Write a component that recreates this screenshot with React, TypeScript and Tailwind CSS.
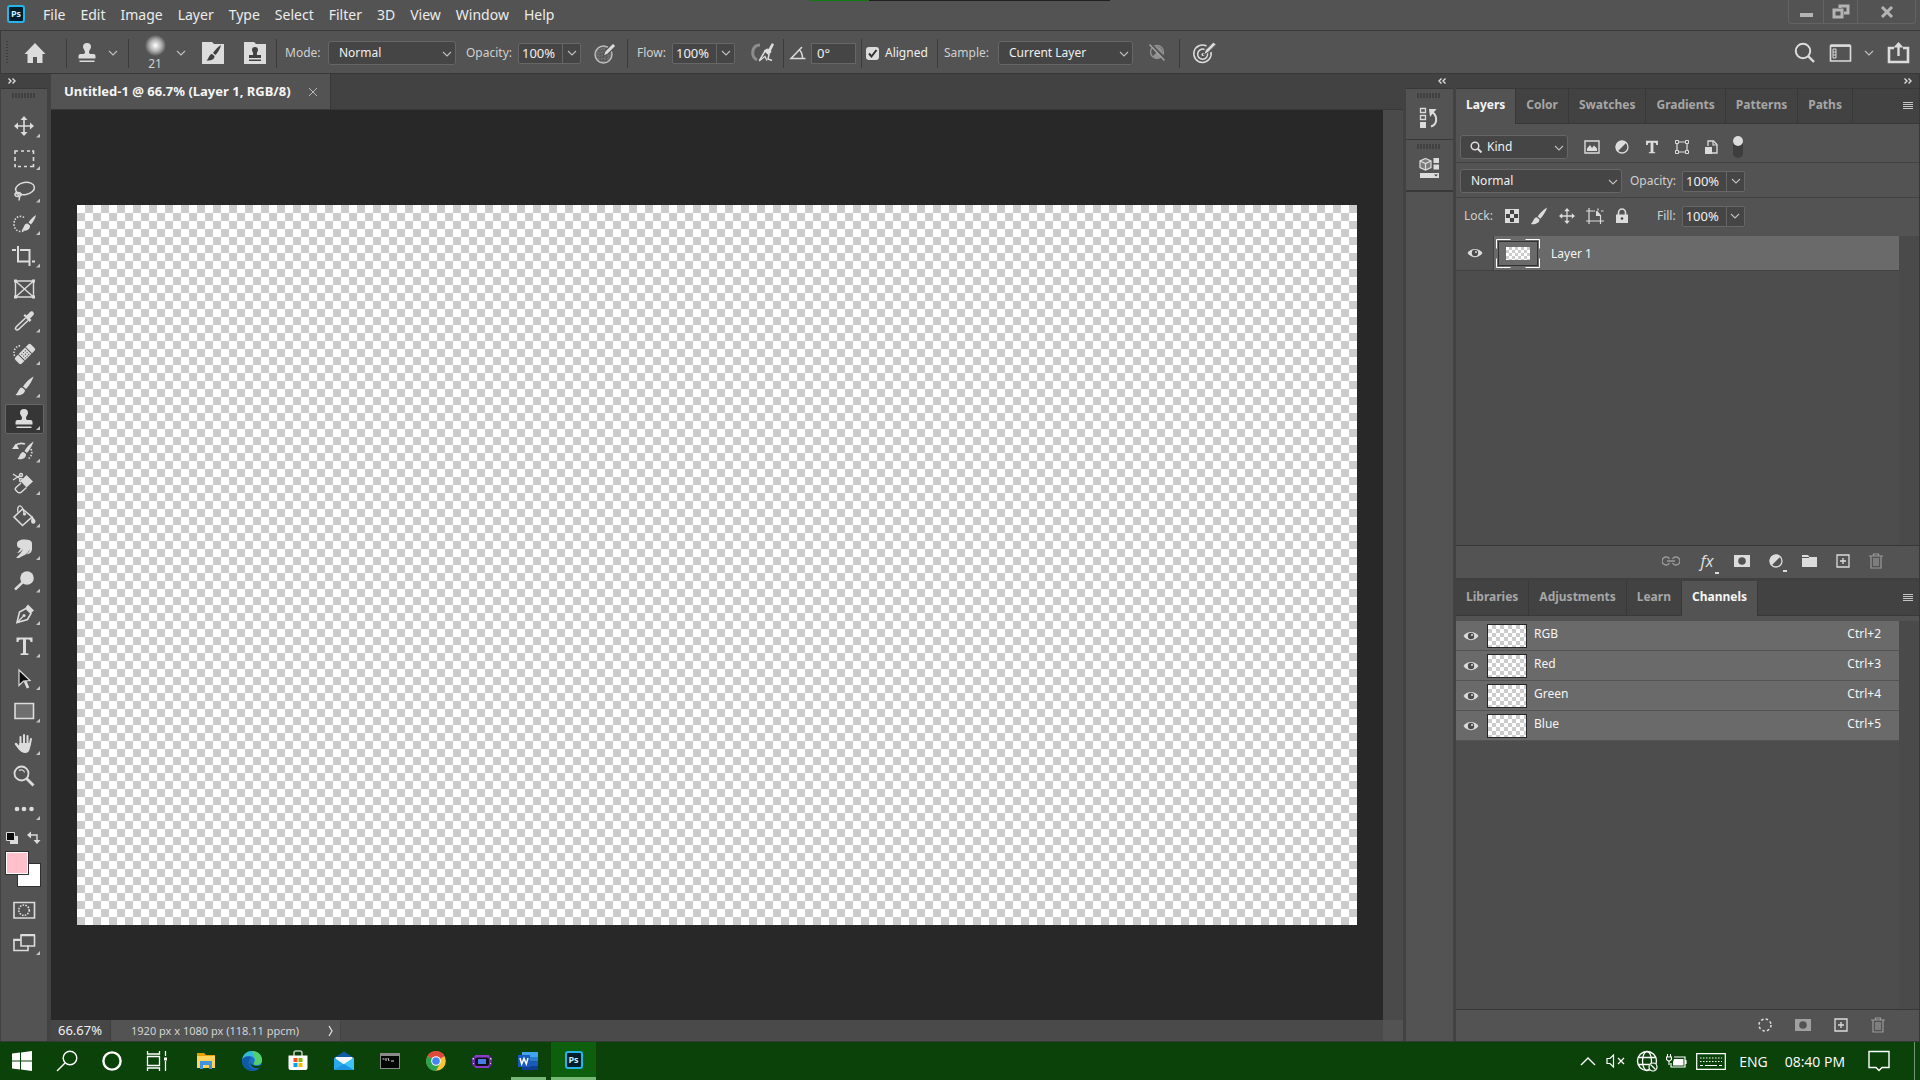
import { useState } from "react";
import type { ReactNode } from "react";

type IconProps = {
  children: ReactNode;
  box?: string;
  className?: string;
};

function Icon({ children, box = "0 0 24 24", className = "h-6 w-6" }: IconProps) {
  return (
    <svg
      viewBox={box}
      className={`shrink-0 ${className}`}
      fill="none"
      stroke="#dcdcdc"
      strokeWidth="1.6"
      aria-hidden="true"
    >
      {children}
    </svg>
  );
}

function Chevron({ className = "" }: { className?: string }) {
  return (
    <Icon box="0 0 12 12" className={`h-3 w-3 ${className}`}>
      <path d="M2 4l4 4 4-4" stroke="#c0c0c0" strokeWidth="1.1" />
    </Icon>
  );
}

const MENUS = [
  "File", "Edit", "Image", "Layer", "Type", "Select",
  "Filter", "3D", "View", "Window", "Help",
];

const stampShape = (
  <g fill="#dcdcdc" stroke="none">
    <path d="M12 2a4 4 0 0 1 4 4c0 2-2 3-2 5 0 1 .5 2 1.500 2h3a2 2 0 0 1 2 2v2.500h-17V15a2 2 0 0 1 2-2h3C9.500 13 10 12 10 11c0-2-2-3-2-5a4 4 0 0 1 4-4z" />
    <path d="M4.500 19.500h15V21h-15z" />
  </g>
);

const brushShape = (
  <g fill="#dcdcdc" stroke="none">
    <path d="M21.500 2.500c-3 1.500-8 6-10.500 10l3 2.500c3.500-3.500 6.500-9 7.500-12.500z" />
    <path d="M10 13.500c-3.500.5-3 4-6.500 7.500 4 .8 9.500-.5 9.500-5z" />
  </g>
);

const moveShape = (
  <g>
    <path d="M12 4v16M4 12h16" />
    <path
      d="M12 2l3.500 4h-7zM12 22l3.500-4h-7zM2 12l4-3.500v7zM22 12l-4-3.500v7z"
      fill="#dcdcdc"
      stroke="none"
    />
  </g>
);

type Tool = {
  name: string;
  art: ReactNode;
  single?: boolean;
};

const TOOLS: Tool[] = [
  { name: "Move", art: moveShape },
  {
    name: "Marquee",
    art: (
      <path d="M3 7V4h3M9 4h3M15 4h3M20 4h1.500v3M21.500 10v4M21.500 17v2.500H18M15 19.500h-3M9 19.500H6M3 17v2.500h1M3 10v4" />
    ),
  },
  {
    name: "Lasso",
    art: (
      <g strokeWidth="1.500">
        <ellipse cx="13" cy="9.500" rx="9.500" ry="6" transform="rotate(-10 13 9.500)" />
        <ellipse cx="6" cy="15.500" rx="3" ry="2" />
        <path d="M4 13c1 3 3 3 3.500 5 .2 1.500-.5 2-.5 3.500" />
      </g>
    ),
  },
  {
    name: "Quick Selection",
    art: (
      <g>
        <path d="M12 5.500C9 3 2 4.500 2 12c0 7 7 9 10 6.500" strokeDasharray="1.500 1.500" />
        <path d="M24 3c-3 1.500-6 5-7.500 7.500l2.500 2c2.500-3 4.500-6.500 5-9.500z" fill="#dcdcdc" stroke="none" />
        <path d="M15.500 11.500c-4 0-3 4-6 7 4 1 9-.5 8.500-5z" fill="#dcdcdc" stroke="none" />
      </g>
    ),
  },
  {
    name: "Crop",
    art: (
      <g strokeWidth="2">
        <path d="M6 2v15.500h11M20 17.500h3M0 6h4M8 6h9.500v16" />
      </g>
    ),
  },
  {
    name: "Frame",
    single: true,
    art: (
      <g strokeWidth="1.400">
        <path d="M3.500 4h18v16h-18zM3.500 4l18 16M21.500 4l-18 16" />
        <path d="M2 2.500h3v3H2zM20 2.500h3v3h-3zM2 18.500h3v3H2zM20 18.500h3v3h-3z" fill="#dcdcdc" stroke="none" />
      </g>
    ),
  },
  {
    name: "Eyedropper",
    art: (
      <g>
        <path d="M13.500 9L4.500 17.500c-1 1-1 2.500-.5 3s2 .5 3-.5L16 11.500" />
        <path d="M11.500 6.500l1.500-1.500 1.500 1.500L18 3c2-2 5 1 3.500 3L18 9.500l1.500 1.500-2 2z" fill="#dcdcdc" stroke="none" />
      </g>
    ),
  },
  {
    name: "Healing Brush",
    art: (
      <g>
        <path d="M2.500 14C1 9 3 4 9 3.500" strokeDasharray="1.500 1.500" />
        <g transform="rotate(-45 13 12)">
          <rect x="2" y="7.500" width="22" height="9" rx="2" fill="#dcdcdc" stroke="none" />
          <path d="M8 7.500v9M18 7.500v9" stroke="#535353" strokeWidth="1" />
          <path d="M10 10h6M10 12.500h6M10 15h6" stroke="#535353" strokeWidth="1" strokeDasharray="1.200 1.200" />
        </g>
      </g>
    ),
  },
  { name: "Brush", art: brushShape },
  { name: "Clone Stamp", art: stampShape },
  {
    name: "History Brush",
    art: (
      <g>
        <path d="M21.500 2.500c-3 1.500-7 6-9 9.500l2.500 2c3-3.500 5.500-8 6.500-11.500z" fill="#dcdcdc" stroke="none" />
        <path d="M11.500 13c-4 .5-3 4-6 7 4 1 9-.5 8.500-5z" fill="#dcdcdc" stroke="none" />
        <path d="M3 7c3-3 7-3 10-2" />
        <path d="M0 10h7L4 4.500z" fill="#dcdcdc" stroke="none" />
        <path d="M19 10c2 4 0 8-3 10" strokeDasharray="1.500 1.500" />
      </g>
    ),
  },
  {
    name: "Background Eraser",
    art: (
      <g strokeWidth="1.400">
        <path d="M14.500 3l6.500 6.500-6.500 6L8.500 9z" fill="#dcdcdc" stroke="none" />
        <path d="M9 11l-5 4.500c-1 1-1 2 0 3l1.500 1.500c1 1 3 1 4 0l5-4.500" />
        <path d="M1 2l7 4.500M1 8l7-4.500" />
        <circle cx="9" cy="3" r="1.500" />
        <circle cx="9" cy="8" r="1.500" />
      </g>
    ),
  },
  {
    name: "Paint Bucket",
    art: (
      <g>
        <path d="M10.500 5L2 13l8.500 8.500L20 13z" />
        <path d="M6 8.500C5 4 6.500 1.500 8.500 2c1.500.5 3 4 3.500 7" strokeWidth="1.300" />
        <circle cx="12.500" cy="10" r="1.600" fill="#dcdcdc" stroke="none" />
        <path d="M20 12c2 2.500 3.500 4 3.500 5.500a2.200 2.200 0 0 1-4.400 0c0-1.500.4-3 .9-5.500z" fill="#dcdcdc" stroke="none" />
      </g>
    ),
  },
  {
    name: "Smudge",
    art: (
      <g stroke="none">
        <path d="M5 7c0-3 3-4.500 7-4.500s8 .5 8 4V12c0 3-2 5-5.500 5.500 2-2 3-3.500 3-5-2 4-4.500 6-7 6.500L7 21H4c3-3 6-6 7-9-2.500 3-4 4-6 4 2-2 3-3 3.500-5C6 11 5 10 5 7z" fill="#dcdcdc" />
      </g>
    ),
  },
  {
    name: "Dodge",
    art: (
      <g>
        <circle cx="15" cy="9" r="6.800" fill="#dcdcdc" stroke="none" />
        <path d="M11 13l-8 7.500" strokeWidth="2.400" />
      </g>
    ),
  },
  {
    name: "Pen",
    art: (
      <g>
        <path d="M14 6.500l5 5-3.500 6L5 20.500 7.500 10z" />
        <path d="M5 20.500l6-6" strokeWidth="1.200" />
        <circle cx="12" cy="13.500" r="1.500" fill="#dcdcdc" stroke="none" />
        <path d="M13.500 5.500l2.500-3 6 6-3 2.500z" fill="#dcdcdc" stroke="none" />
      </g>
    ),
  },
  {
    name: "Type",
    art: (
      <path
        d="M4.500 3.500h16V8H18.500c0-1.500-.5-2.500-2-2.500h-2.500v13c0 .8 1 1 2.500 1v1.500h-8v-1.500c1.500 0 2.500-.2 2.500-1v-13H8.500c-1.500 0-2 1-2 2.500H4.500z"
        fill="#dcdcdc"
        stroke="none"
      />
    ),
  },
  {
    name: "Path Selection",
    art: (
      <g>
        <path d="M13 14l3 7" strokeWidth="2.800" />
        <path d="M7 3v15.500l4.500-4.500 6.500-.5z" fill="#0c0c0c" strokeWidth="1.200" />
      </g>
    ),
  },
  {
    name: "Rectangle",
    art: <path d="M3 4.500h18.500v15H3z" fill="#6f6f6f" />,
  },
  {
    name: "Hand",
    art: (
      <g stroke="#dcdcdc" strokeLinecap="round" strokeWidth="2">
        <path d="M8.500 5v7M12 3v9M15.500 4v9M19 7l-1.500 7" />
        <path d="M4 12l4 5" strokeWidth="2.500" />
        <path d="M7.500 11h11l-.5 5c-.5 3-2 5-5 5-4 0-6-4-7-5z" fill="#dcdcdc" strokeWidth="0" />
      </g>
    ),
  },
  {
    name: "Zoom",
    single: true,
    art: (
      <g>
        <circle cx="9.500" cy="9.500" r="7" strokeWidth="1.800" />
        <path d="M7 6.500c2-1.500 5-.5 5.500 2" strokeWidth="1.200" />
        <path d="M14.500 14.500l7 7" strokeWidth="2.800" />
      </g>
    ),
  },
  {
    name: "Edit Toolbar",
    art: (
      <g fill="#dcdcdc" stroke="none">
        <circle cx="5" cy="12" r="2.300" />
        <circle cx="12" cy="12" r="2.300" />
        <circle cx="19.500" cy="12" r="2.300" />
      </g>
    ),
  },
];

const CHECK =
  "bg-[repeating-conic-gradient(#cccccc_0_25%,#ffffff_0_50%)]";

function Separator() {
  return <div className="h-[29px] w-px shrink-0 bg-[#3c3c3c]" />;
}

function SelectBox({
  label,
  value,
  className,
  inset = "pl-[10px]",
}: {
  label: string;
  value: string;
  className: string;
  inset?: string;
}) {
  return (
    <div className={`relative shrink-0 ${className}`}>
      <select
        aria-label={label}
        className={`h-6 w-full appearance-none rounded-[3px] border border-[#666666] bg-[#454545] text-[12px] text-[#f0f0f0] outline-none ${inset}`}
      >
        <option>{value}</option>
      </select>
      <Chevron className="pointer-events-none absolute top-[7px] right-[3px]" />
    </div>
  );
}

function Percent({ id, label }: { id: string; label: string }) {
  const [value, setValue] = useState("100%");

  return (
    <div className="flex items-center gap-[6px]">
      <label htmlFor={id} className="text-[#d0d0d0]">
        {label}
      </label>
      <div className="flex h-[21px] w-[63px] rounded-[2px] border border-[#666666] bg-[#454545]">
        <input
          id={id}
          value={value}
          onChange={(e) => setValue(e.target.value)}
          className="w-[43px] pl-[3px] text-[13px] leading-[18px] text-[#f0f0f0] outline-none"
        />
        <button
          aria-label={`${label} slider`}
          className="flex flex-1 items-center justify-center border-l border-[#666666]"
        >
          <Chevron />
        </button>
      </div>
    </div>
  );
}

function Grip() {
  return (
    <div className="h-[5px] w-6 bg-[repeating-linear-gradient(90deg,#414141_0_2px,#535353_2px_3px)]" />
  );
}

function MenuBar() {
  return (
    <header className="relative flex h-[31px] shrink-0 items-start border-b border-[#3b3b3b]">
      <div className="absolute top-0 left-[809px] flex h-px w-[301px] bg-[#202020]">
        <div className="w-[60px] bg-[#0f7b0f]" />
      </div>

      <div className="mt-[5px] ml-[7px] flex h-[18px] w-[18px] items-center justify-center rounded-[3px] border-2 border-[#26b4ea] bg-[#001d2c] font-['Open_Sans',sans-serif] text-[9px] font-bold text-[#c9f0ff]">
        Ps
      </div>

      <nav className="ml-[18px] flex h-7 items-center gap-[15px] text-[14px] text-[#ececec]">
        {MENUS.map((menu) => (
          <button key={menu}>
            {menu}
          </button>
        ))}
      </nav>

      <div className="mr-1 ml-auto flex h-6 w-[128px] rounded-b-[4px] border border-t-0 border-[#636363]">
        <button aria-label="Minimize" className="flex w-[35px] items-center justify-center border-r border-[#636363]">
          <span className="mt-[6px] h-1 w-[13px] bg-[#b4b4b4]" />
        </button>
        <button aria-label="Restore" className="flex w-[34px] items-center justify-center border-r border-[#636363]">
          <Icon box="0 0 18 16" className="h-4 w-[18px]">
            <path d="M8 4V2h8v7h-4M2 6h8v7H2z" stroke="#b4b4b4" strokeWidth="3" />
          </Icon>
        </button>
        <button aria-label="Close" className="flex flex-1 items-center justify-center">
          <Icon box="0 0 14 12" className="h-3 w-[14px]">
            <path d="M2 1l10 10M12 1L2 11" stroke="#b4b4b4" strokeWidth="3" />
          </Icon>
        </button>
      </div>
    </header>
  );
}

function OptionsBar() {
  const [aligned, setAligned] = useState(true);
  const [angle, setAngle] = useState("0°");

  return (
    <section className="flex h-[43px] shrink-0 items-center border-b border-l border-[#3b3b3b] border-b-[#383838] pt-[2px] text-[12px] text-[#d0d0d0]">
      <div className="flex w-[65px] shrink-0 items-center gap-[15px] pl-[5px]">
        <div className="h-6 w-[2px] bg-[repeating-linear-gradient(#3c3c3c_0_1px,#535353_1px_3px)]" />
        <button aria-label="Home">
          <Icon>
            <path d="M12 2L1.500 13h3v9h5.500v-6h4v6h5.500v-9h3z" fill="#dcdcdc" stroke="none" />
          </Icon>
        </button>
      </div>
      <Separator />

      <button aria-label="Clone Stamp presets" className="flex w-[61px] shrink-0 items-center gap-2 pl-2">
        <Icon>{stampShape}</Icon>
        <Chevron />
      </button>
      <Separator />

      <div className="flex w-[147px] shrink-0 items-center pl-[14px]">
        <button aria-label="Brush preset" className="flex items-center gap-2">
          <span className="flex w-6 flex-col items-center text-[12px] leading-[15px]">
            <span className="h-[21px] w-[21px] rounded-full bg-[radial-gradient(circle,#ffffff_0%,#b0b0b0_40%,#535353_72%)]" />
            21
          </span>
          <Chevron />
        </button>
        <button aria-label="Brush settings" className="ml-[14px]">
          <Icon>
            <path d="M1 1h10l2 2h10v20H1z" fill="#dcdcdc" stroke="none" />
            <path d="M20 4c-3 1.500-6 5-8 8l2.500 2c2.500-2.500 5-7 5.500-10zM11 13c-3 .5-2.500 3.500-5.500 6.500 3.500.5 8-.5 8-4.500z" fill="#404040" stroke="none" />
          </Icon>
        </button>
        <button aria-label="Clone source" className="ml-[18px]">
          <Icon>
            <path d="M1 1h10l2 2h10v20H1z" fill="#dcdcdc" stroke="none" />
            <path d="M12 6a3 3 0 0 1 3 3c0 1.500-1.500 2-1 5h4v3H6v-3h4c.5-3-1-3.500-1-5a3 3 0 0 1 3-3zM6 18.500h12V20H6z" fill="#404040" stroke="none" />
          </Icon>
        </button>
      </div>
      <Separator />

      <div className="flex w-[350px] shrink-0 items-center pl-2">
        <span>Mode:</span>
        <SelectBox label="Mode" value="Normal" className="mr-[10px] ml-auto w-[128px]" />
        <Percent id="brush-opacity" label="Opacity:" />
        <button aria-label="Pressure for opacity" className="mr-[10px] ml-3">
          <Icon>
            <circle cx="10.500" cy="13.500" r="8.500" fill="#6e6e6e" stroke="#bdbdbd" strokeWidth="1.400" />
            <path d="M5 10h11M4 13h13M4 16h13M7 19h8M7 7v13M10 6v15M13 7v14" stroke="#484848" strokeWidth="1" strokeDasharray="1.500 1.500" />
            <path d="M10 15.500l2-5.500 8-8 3 3-8 8z" fill="#dcdcdc" stroke="#535353" strokeWidth="1.200" />
          </Icon>
        </button>
      </div>
      <Separator />

      <div className="flex w-[155px] shrink-0 items-center justify-between pr-[9px] pl-[9px]">
        <Percent id="brush-flow" label="Flow:" />
        <button aria-label="Airbrush">
          <Icon>
            <path d="M10 4C2 4 0 15 7 19" stroke="#8c8c8c" strokeWidth="3" />
            <path d="M9.500 19.500l5.500-9.500 4 3.500-1 4.500 4 1.500" strokeWidth="1.500" />
            <path d="M14 9.500l3-2 1.500.5L22 2l2 1.500-3 6 .5 1.500-3 3z" fill="#dcdcdc" stroke="none" />
            <path d="M9 20l6-4.500 2 4" strokeWidth="1.300" />
          </Icon>
        </button>
      </div>
      <Separator />

      <div className="flex w-[77px] shrink-0 items-center gap-1 pl-[5px]">
        <label htmlFor="brush-angle" aria-label="Brush angle">
          <Icon box="0 0 18 16" className="h-4 w-[18px]">
            <path d="M13 2L2 13.500h14.500M10 4.500c2.500 2 3.500 5 3.500 9" strokeWidth="1.500" />
          </Icon>
        </label>
        <input
          id="brush-angle"
          value={angle}
          onChange={(e) => setAngle(e.target.value)}
          className="h-[21px] w-[45px] border border-[#666666] bg-[#454545] pl-[5px] text-[13px] text-[#f0f0f0] outline-none"
        />
      </div>
      <Separator />

      <label className="relative flex w-[75px] shrink-0 items-center gap-[6px] pl-1 text-[#f0f0f0]">
        <input
          type="checkbox"
          checked={aligned}
          onChange={(e) => setAligned(e.target.checked)}
          className="h-[13px] w-[13px] appearance-none rounded-[3px] bg-[#dcdcdc]"
        />
        {aligned && (
          <Icon box="0 0 13 13" className="pointer-events-none absolute left-1 h-[13px] w-[13px]">
            <path d="M3 6.500l2.500 3 5-6.500" stroke="#303030" strokeWidth="2" />
          </Icon>
        )}
        Aligned
      </label>
      <Separator />

      <div className="flex w-[241px] shrink-0 items-center pl-[6px]">
        <span>Sample:</span>
        <SelectBox label="Sample" value="Current Layer" className="mr-3 ml-auto w-[135px]" />
        <button aria-label="Ignore adjustment layers" className="mr-[10px]">
          <Icon>
            <circle cx="12" cy="11" r="6.500" stroke="#929292" strokeWidth="1.400" />
            <path d="M7.500 6.500A6.500 6.500 0 0 1 16.500 15.500zM7.500 15.500a6.500 6.500 0 0 0 9 0L12 11z" fill="#929292" stroke="none" />
            <path d="M5.500 2.500l15.500 16" stroke="#535353" strokeWidth="2" />
            <path d="M4.500 3.500l15 16" stroke="#a0a0a0" strokeWidth="1.500" />
          </Icon>
        </button>
      </div>
      <Separator />

      <button aria-label="Pressure for size" className="ml-3 shrink-0">
        <Icon>
          <path d="M14.500 5A8.700 8.700 0 1 0 19 11" strokeWidth="1.500" />
          <path d="M12.500 8.500A5 5 0 1 0 15.500 12" strokeWidth="1.500" />
          <circle cx="11" cy="13.500" r="1.500" fill="#dcdcdc" stroke="none" />
          <path d="M11.500 14l2-5 8-8L24 3.500l-8 8z" fill="#dcdcdc" stroke="#535353" strokeWidth="1" />
        </Icon>
      </button>

      <div className="mr-[10px] ml-auto flex shrink-0 items-center">
        <button aria-label="Search">
          <Icon>
            <circle cx="10" cy="10" r="7.200" strokeWidth="2" />
            <path d="M15 15l6 6" strokeWidth="2.400" />
          </Icon>
        </button>
        <button aria-label="Workspace" className="ml-3 flex items-center gap-[10px]">
          <Icon>
            <path d="M1.500 5h20v15h-20z" strokeWidth="1.600" />
            <path d="M1.500 4.500h20" strokeWidth="2.500" />
            <path d="M4 8h3v9H4zM4 11h3M4 14h3" strokeWidth="1" />
          </Icon>
          <Chevron />
        </button>
        <button aria-label="Share" className="ml-[11px]">
          <Icon>
            <path d="M8 7H3v14h19V7h-5" strokeWidth="2.600" />
            <path d="M12.500 4v11" strokeWidth="2.400" />
            <path d="M7.500 6.500l5-5.500 5 5.500z" fill="#dcdcdc" stroke="none" />
          </Icon>
        </button>
      </div>
    </section>
  );
}

function Toolbox() {
  const [active, setActive] = useState("Clone Stamp");

  return (
    <aside className="flex w-[51px] shrink-0 flex-col border-r-4 border-l border-[#424242] bg-[#535353]">
      <div className="flex h-[15px] shrink-0 items-center border-b border-[#383838] bg-[#424242] pl-[7px]">
        <DoubleArrow />
      </div>
      <div className="flex h-[21px] shrink-0 pt-1 pl-[11px]">
        <Grip />
      </div>

      <div className="flex h-[715px] shrink-0 flex-col">
        {TOOLS.map((tool) => (
          <button
            key={tool.name}
            aria-label={tool.name}
            onClick={() => setActive(tool.name)}
            className="relative flex min-h-0 flex-1 items-center pl-1"
          >
            <span
              className={
                active === tool.name
                  ? "flex h-[30px] w-[39px] items-center rounded-[2px] border border-[#666666] bg-[#363636] pl-[6px]"
                  : "flex h-[30px] w-[39px] items-center pl-[7px]"
              }
            >
              <Icon>{tool.art}</Icon>
            </span>
            {!tool.single && (
              <span className="absolute right-[7px] bottom-[5px] h-1 w-1 bg-[#c4c4c4] [clip-path:polygon(100%_0,100%_100%,0_100%)]" />
            )}
          </button>
        ))}
      </div>

      <div className="flex h-[26px] shrink-0 items-start gap-[8px] pt-[6px] pl-[4px]">
        <button aria-label="Default colors">
          <Icon box="0 0 14 14" className="h-[14px] w-[14px]">
            <path d="M5 5h8v8H5z" fill="#dcdcdc" stroke="none" />
            <path d="M1.500 1.500h8v8h-8z" fill="#0c0c0c" strokeWidth="1" />
          </Icon>
        </button>
        <button aria-label="Switch colors">
          <Icon box="0 0 14 14" className="h-[14px] w-[14px]">
            <path d="M3 4h7v6" strokeWidth="1.400" />
            <path d="M0 4l4-3.500v7zM10 13L6.500 9h7z" fill="#dcdcdc" stroke="none" />
          </Icon>
        </button>
      </div>
      <div className="relative ml-1 h-[37px] w-9 shrink-0">
        <button
          aria-label="Background color"
          className="absolute top-3 left-3 h-6 w-6 border border-[#303030] bg-white"
        />
        <button
          aria-label="Foreground color"
          className="absolute top-0 left-0 h-6 w-6 border border-[#303030] bg-[#ffc0cb] shadow-[inset_0_0_0_1px_#ffffff]"
        />
      </div>
      <button aria-label="Quick mask" className="mt-[10px] flex h-6 shrink-0 pl-[11px]">
        <Icon>
          <path d="M2 4.500h20.500v15.500H2z" />
          <circle cx="12" cy="12.200" r="5.200" strokeDasharray="1.600 1.200" />
        </Icon>
      </button>
      <button aria-label="Screen mode" className="relative mt-[9px] flex h-6 shrink-0 pl-[11px]">
        <Icon>
          <path d="M8.500 8.500H2v11h14v-5" />
          <path d="M9 4.500h13.500v10.500H9z" />
          <path d="M8.500 4h14.500M1.500 9h7" strokeWidth="2" />
        </Icon>
        <span className="absolute right-[7px] bottom-0 h-1 w-1 bg-[#c4c4c4] [clip-path:polygon(100%_0,100%_100%,0_100%)]" />
      </button>
    </aside>
  );
}

function DoubleArrow({ left = false }: { left?: boolean }) {
  return (
    <Icon box="0 0 8 6" className="h-[6px] w-2">
      <path
        d={left ? "M3.500 .5L1 3l2.500 2.500M7.500 .5L5 3l2.500 2.500" : "M.5 .5L3 3 .5 5.500M4.500 .5L7 3 4.500 5.500"}
        strokeWidth="1.400"
      />
    </Icon>
  );
}

function DocumentArea() {
  return (
    <main className="flex min-w-0 flex-1 flex-col">
      <div className="flex h-9 shrink-0 border-b border-[#383838] bg-[#424242]">
        <div className="flex w-[280px] items-center justify-between border-r border-[#383838] bg-[#535353] pt-px pr-3 pl-[13px] text-[13px] font-bold whitespace-nowrap text-[#f5f5f5]">
          Untitled-1 @ 66.7% (Layer 1, RGB/8)
          <button aria-label="Close document">
            <Icon box="0 0 10 10" className="h-[10px] w-[10px]">
              <path d="M1 1l8 8M9 1L1 9" stroke="#b8b8b8" strokeWidth="1" />
            </Icon>
          </button>
        </div>
      </div>

      <div className="flex min-h-0 flex-1">
        <div className="flex min-w-0 flex-1 items-center justify-center overflow-hidden bg-[#282828]">
          <div className={`h-[720px] w-[1280px] shrink-0 bg-[length:16px_16px] ${CHECK}`} />
        </div>
        <div className="w-5 shrink-0 bg-[#4a4a4a]" />
      </div>

      <div className="flex h-[21px] shrink-0 bg-[#4a4a4a] text-[11px]">
        <input
          aria-label="Zoom level"
          defaultValue="66.67%"
          className="w-[60px] border-r border-[#3e3e3e] bg-[#464646] pb-[2px] pl-[7px] text-[13px] leading-[18px] text-[#f0f0f0] outline-none"
        />
        <div className="flex w-[230px] items-center justify-between border-r border-[#424242] bg-[#535353] pt-px pr-[6px] pl-5 whitespace-nowrap text-[#d4d4d4]">
          1920 px x 1080 px (118.11 ppcm)
          <button aria-label="Status options">
            <Icon box="0 0 6 12" className="h-3 w-[6px]">
              <path d="M1 1l3 5-3 5" strokeWidth="1.300" />
            </Icon>
          </button>
        </div>
        <div className="ml-auto w-5 bg-[#535353]" />
      </div>
    </main>
  );
}

function Dock() {
  return (
    <aside className="flex w-[53px] shrink-0 flex-col border-r-3 border-l-3 border-[#424242] bg-[#535353]">
      <div className="flex h-[15px] items-center justify-end border-b border-[#383838] bg-[#424242] pr-[7px]">
        <DoubleArrow left />
      </div>
      <button aria-label="History" className="flex h-[51px] flex-col items-center gap-[7px] border-b border-[#383838] pt-1 pr-[2px]">
        <Grip />
        <Icon>
          <path d="M3.500 3.500h5v4h-5zM3.500 10.500h5v4h-5z" strokeWidth="1.300" />
          <path d="M3 17h6v6H3z" fill="#dcdcdc" stroke="none" />
          <path d="M14 21.500c6-2 7-9 2-14" strokeWidth="2" />
          <path d="M12 4h7.500l-6.500 8z" fill="#dcdcdc" stroke="none" />
        </Icon>
      </button>
      <button aria-label="Properties" className="flex h-[52px] flex-col items-center gap-2 border-b-2 border-[#383838] pt-1 pr-[2px]">
        <Grip />
        <Icon>
          <path d="M8.500 1.500l5.500 2.500v6.500L8.500 13 3 10.500V4z" fill="#7a7a7a" strokeWidth="1.200" />
          <path d="M3 4l5.500 2.500L14 4M8.500 6.500V13" strokeWidth="1.200" />
          <path d="M16.500 1h5.500v5h-5.500zM16.500 7.500h5.500v5h-5.500zM3 16h19v5H3z" fill="#dcdcdc" stroke="none" />
          <path d="M17 17.500h4l-2 2z" fill="#404040" stroke="none" />
        </Icon>
      </button>
    </aside>
  );
}

function PanelTabs({
  tabs,
  initial,
}: {
  tabs: string[];
  initial: string;
}) {
  const [active, setActive] = useState(initial);

  return (
    <div className="flex h-[35px] shrink-0 bg-[#424242]">
      {tabs.map((tab) => (
        <button
          key={tab}
          onClick={() => setActive(tab)}
          className={
            active === tab
              ? "border-r border-[#383838] bg-[#535353] px-[10px] pb-1 text-[12px] font-bold text-[#f5f5f5]"
              : "border-r border-b border-[#383838] px-[10px] pb-[3px] text-[12px] font-bold text-[#a6a6a6]"
          }
        >
          {tab}
        </button>
      ))}
      <div className="flex flex-1 items-center justify-end border-b border-[#383838] pr-[6px]">
        <button aria-label="Panel menu">
          <Icon box="0 0 10 8" className="h-2 w-[10px]">
            <path d="M0 .5h10M0 2.500h10M0 4.500h10M0 6.500h10" strokeWidth="1" stroke="#c4c4c4" />
          </Icon>
        </button>
      </div>
    </div>
  );
}

function Eye() {
  return (
    <Icon box="0 0 16 12" className="h-3 w-4">
      <path d="M.5 6C4 .5 12 .5 15.500 6 12 11.500 4 11.500 .5 6z" fill="#dcdcdc" stroke="none" />
      <circle cx="8" cy="6" r="3.200" fill="#4a4a4a" stroke="none" />
      <circle cx="9" cy="5" r="1" fill="#dcdcdc" stroke="none" />
    </Icon>
  );
}

function MaskIcon({ dim = false }: { dim?: boolean }) {
  return (
    <Icon box="0 0 16 12" className="h-3 w-4">
      <path d="M0 0h16v12H0z" fill={dim ? "#a0a0a0" : "#dcdcdc"} stroke="none" />
      <circle cx="8" cy="6" r="3.800" fill="#535353" stroke="none" />
    </Icon>
  );
}

function AdjustIcon() {
  return (
    <Icon box="0 0 14 14" className="h-[14px] w-[14px]">
      <circle cx="7" cy="7" r="6" strokeWidth="1.300" />
      <path d="M2.500 11.500A6.300 6.300 0 0 1 11.500 2.500z" fill="#dcdcdc" stroke="none" />
    </Icon>
  );
}

function PlusIcon() {
  return (
    <Icon box="0 0 14 14" className="h-[14px] w-[14px]">
      <path d="M1 1h12v12H1zM7 4v6M4 7h6" strokeWidth="1.300" />
    </Icon>
  );
}

function TrashIcon() {
  return (
    <Icon box="0 0 14 16" className="h-4 w-[14px]">
      <path d="M0 3h14M4.500 3V1h5v2M2 3v12h10V3M5 5v8M7 5v8M9 5v8" stroke="#9a9a9a" strokeWidth="1.200" />
    </Icon>
  );
}

function LayersPanel() {
  return (
    <section className="flex min-h-0 flex-[491] flex-col border-b-3 border-[#404040]">
      <PanelTabs
        tabs={["Layers", "Color", "Swatches", "Gradients", "Patterns", "Paths"]}
        initial="Layers"
      />

      <div className="flex h-[39px] shrink-0 items-center border-b border-[#424242] pt-[7px] pl-1">
        <div className="relative">
          <SelectBox label="Filter kind" value="Kind" inset="pl-[26px]" className="w-[108px]" />
          <Icon box="0 0 12 12" className="pointer-events-none absolute top-[6px] left-[10px] h-3 w-3">
            <circle cx="5" cy="5" r="3.800" strokeWidth="1.500" />
            <path d="M7.500 7.500l4 4" strokeWidth="2" />
          </Icon>
        </div>
        <div className="ml-4 flex items-center gap-[15px]">
          <button aria-label="Filter pixel layers">
            <Icon box="0 0 16 14" className="h-[14px] w-4">
              <path d="M1 1h14v12H1z" strokeWidth="1.400" />
              <path d="M3 11V8.500L6 5l2 3 2-2.500 3 3V11z" fill="#dcdcdc" stroke="none" />
            </Icon>
          </button>
          <button aria-label="Filter adjustment layers">
            <AdjustIcon />
          </button>
          <button aria-label="Filter type layers">
            <Icon className="h-[14px] w-4" box="3 2 19 20">
              <path d="M4 3h17v6h-2.500c0-2-.5-3-2-3H14.500v12.500c0 .8 1 1 2.500 1V21H8v-1.500c1.500 0 2.500-.2 2.500-1V6H8.500c-1.500 0-2 1-2 3H4z" fill="#dcdcdc" stroke="none" />
            </Icon>
          </button>
          <button aria-label="Filter shape layers">
            <Icon box="0 0 14 14" className="h-[14px] w-[14px]">
              <path d="M2 2h10v10H2z" strokeWidth="1.200" />
              <path d="M.5 .5h3v3h-3zM10.500 .5h3v3h-3zM.5 10.500h3v3h-3zM10.500 10.500h3v3h-3z" fill="#535353" strokeWidth="1" />
            </Icon>
          </button>
          <button aria-label="Filter smart objects">
            <Icon box="0 0 14 14" className="h-[14px] w-[14px]">
              <path d="M4 6V1h5.500L13 4.500V13H8" strokeWidth="1.300" />
              <path d="M9 1v4h4" strokeWidth="1.200" />
              <path d="M1 7h7v7H1z" fill="#dcdcdc" stroke="none" />
            </Icon>
          </button>
          <button
            aria-label="Toggle layer filtering"
            className="flex h-[22px] w-[10px] items-start rounded-full bg-[#3e3e3e]"
          >
            <span className="h-[10px] w-[10px] rounded-full bg-[#dcdcdc]" />
          </button>
        </div>
      </div>

      <div className="flex h-[35px] shrink-0 items-center gap-2 border-b border-[#424242] pt-[2px] pl-1">
        <SelectBox label="Blend mode" value="Normal" className="w-[162px]" />
        <Percent id="layer-opacity" label="Opacity:" />
      </div>

      <div className="flex h-[38px] shrink-0 items-center pb-[2px] pl-2 text-[12px] text-[#d0d0d0]">
        Lock:
        <div className="ml-3 flex items-center gap-[11px]">
          <button aria-label="Lock transparent pixels">
            <Icon box="0 0 14 14" className="h-[14px] w-[14px]">
              <path d="M0 0h14v14H0z" fill="#dcdcdc" stroke="none" />
              <path d="M5 1h4v4H5zM1 5h4v4H1zM9 5h4v4H9zM5 9h4v4H5z" fill="#404040" stroke="none" />
            </Icon>
          </button>
          <button aria-label="Lock image pixels">
            <Icon box="3 2 19 20" className="h-[18px] w-[18px]">{brushShape}</Icon>
          </button>
          <button aria-label="Lock position">
            <Icon box="2 2 20 20" className="h-4 w-4">{moveShape}</Icon>
          </button>
          <button aria-label="Lock artboard nesting">
            <Icon box="0 0 18 16" className="h-4 w-[18px]">
              <path d="M0 3h9M3 0v13h11.500V7.500l-4-4.500M0 13h18M12 .5v2M15 3h2.500M14.500 13v3M3 13v3" strokeWidth="1.200" />
              <path d="M10 3v5h5z" fill="#dcdcdc" stroke="none" />
            </Icon>
          </button>
          <button aria-label="Lock all">
            <Icon box="0 0 14 16" className="h-4 w-[14px]">
              <path d="M3.500 7V4.500a3.500 3.500 0 0 1 7 0V7" strokeWidth="1.600" />
              <path d="M1 6.500h12V15H1z" fill="#dcdcdc" stroke="none" />
              <circle cx="7" cy="10.500" r="1.300" fill="#404040" stroke="none" />
            </Icon>
          </button>
        </div>
        <div className="ml-7">
          <Percent id="layer-fill" label="Fill:" />
        </div>
      </div>

      <div className="flex min-h-0 flex-1 bg-[#4d4d4d]">
        <div className="min-w-0 flex-1">
          <div className="flex h-[35px] border-b border-[#424242] bg-[#535353]">
            <button aria-label="Layer visibility" className="flex w-[38px] items-center justify-center border-r border-[#424242]">
              <Eye />
            </button>
            <div className="flex flex-1 items-center bg-[#6a6a6a] pt-px pl-[2px] text-[12px] text-[#f5f5f5]">
              <div className="relative mr-[11px] flex h-[29px] w-11 items-center justify-center">
                <div className="absolute inset-[2px] border border-[#303030]" />
                <div className={`h-[13px] w-6 bg-[length:6px_6px] ${CHECK}`} />
                <svg viewBox="0 0 44 29" className="absolute inset-0" fill="none" stroke="#ffffff" strokeWidth="1" aria-hidden="true">
                  <path d="M14.500 .5H.5v9M29.500 .5h14v9M14.500 28.500H.5v-9M29.500 28.500h14v-9" />
                </svg>
              </div>
              Layer 1
            </div>
          </div>
        </div>
        <div className="w-5 bg-[#4a4a4a]" />
      </div>

      <div className="flex h-[33px] shrink-0 items-center justify-end gap-[19px] border-t border-[#383838] pr-9 pb-[2px]">
        <button aria-label="Link layers">
          <Icon box="0 0 18 10" className="h-[10px] w-[18px]">
            <path d="M7.500 3A4 4 0 1 0 7.500 7M10.500 3A4 4 0 1 1 10.500 7M5 5h8" stroke="#9a9a9a" strokeWidth="1.400" />
          </Icon>
        </button>
        <button aria-label="Layer style" className="relative w-4 text-[16px] leading-[18px] text-[#dcdcdc] italic">
          fx
          <span className="absolute -right-1 -bottom-1 h-[2px] w-1 bg-[#dcdcdc]" />
        </button>
        <button aria-label="Add mask">
          <MaskIcon />
        </button>
        <button aria-label="New adjustment layer" className="relative">
          <AdjustIcon />
          <span className="absolute -right-1 -bottom-1 h-[2px] w-1 bg-[#dcdcdc]" />
        </button>
        <button aria-label="New group">
          <Icon box="0 0 15 12" className="h-3 w-[15px]">
            <path d="M0 0h6l1.500 2H15v10H0z" fill="#dcdcdc" stroke="none" />
            <path d="M0 2.500h7" stroke="#535353" strokeWidth="1" />
          </Icon>
        </button>
        <button aria-label="New layer">
          <PlusIcon />
        </button>
        <button aria-label="Delete layer">
          <TrashIcon />
        </button>
      </div>
    </section>
  );
}

const CHANNELS = [
  { name: "RGB", shortcut: "Ctrl+2" },
  { name: "Red", shortcut: "Ctrl+3" },
  { name: "Green", shortcut: "Ctrl+4" },
  { name: "Blue", shortcut: "Ctrl+5" },
];

function ChannelsPanel() {
  return (
    <section className="flex min-h-0 flex-[461] flex-col">
      <PanelTabs
        tabs={["Libraries", "Adjustments", "Learn", "Channels"]}
        initial="Channels"
      />

      <div className="flex min-h-0 flex-1 border-t-5 border-[#535353] bg-[#4d4d4d]">
        <ul className="flex-1">
          {CHANNELS.map((channel) => (
            <li
              key={channel.name}
              className="flex h-[30px] items-center border-b border-[#535353] bg-[#6a6a6a] pr-[18px] pl-[7px] text-[12px] text-[#f5f5f5]"
            >
              <button aria-label={`${channel.name} visibility`}>
                <Eye />
              </button>
              <div className={`mr-[7px] ml-2 h-6 w-10 border border-[#262626] bg-[length:8px_8px] ${CHECK}`} />
              <span className="pb-1">{channel.name}</span>
              <span className="ml-auto pb-1">{channel.shortcut}</span>
            </li>
          ))}
        </ul>
        <div className="w-5 bg-[#4a4a4a]" />
      </div>

      <div className="flex h-8 shrink-0 items-center justify-end gap-[23px] border-t border-[#383838] pr-[34px] pb-px">
        <button aria-label="Load channel as selection">
          <Icon box="0 0 14 14" className="h-[14px] w-[14px]">
            <circle cx="7" cy="7" r="6" strokeDasharray="2.500 2.200" strokeWidth="1.500" />
          </Icon>
        </button>
        <button aria-label="Save selection as channel">
          <MaskIcon dim />
        </button>
        <button aria-label="New channel">
          <PlusIcon />
        </button>
        <button aria-label="Delete channel">
          <TrashIcon />
        </button>
      </div>
    </section>
  );
}

const APPS: { name: string; art: ReactNode }[] = [
  {
    name: "File Explorer",
    art: (
      <g stroke="none">
        <path d="M3 4h7l2 2h9v4H3z" fill="#e8a200" />
        <path d="M3 7h18v12H3z" fill="#ffd35c" />
        <path d="M6 12h12v8h-3v-4H9v4H6z" fill="#3f94e0" />
      </g>
    ),
  },
  {
    name: "Edge",
    art: (
      <g stroke="none">
        <circle cx="12" cy="12" r="10" fill="#1b6fc4" />
        <path d="M2 11C3 5 7 2 12 2c6 0 10 4 10 9 0 4-3 5-6 5-2 0-3-1-2-2 2-3 0-7-5-7-4 0-6 2-7 4z" fill="#35b9d8" />
        <path d="M12 2c6 0 10 4 10 9 0 4-3 5-6 5-2 0-3-1-2-2 3-5-1-9-2-12z" fill="#55cf6c" />
        <path d="M2 11c2-4 7-4 9-2-3 2-4 9 3 11 2 .5 4 0 6-1-4 5-18 4-18-8z" fill="#0f5aa8" />
        <path d="M10.500 11c-1 3 1 6 6 6 2 0 4-.5 5-1.500l-1.500 3C14 21 9 17 10.500 11z" fill="#0a420a" />
      </g>
    ),
  },
  {
    name: "Microsoft Store",
    art: (
      <g stroke="none">
        <path d="M8 7V4a2 2 0 0 1 2-2h4a2 2 0 0 1 2 2v3" stroke="#b8c4b8" strokeWidth="1.600" />
        <path d="M2.500 6.500h19V19a2 2 0 0 1-2 2h-15a2 2 0 0 1-2-2z" fill="#ffffff" />
        <path d="M7.500 9h4v4h-4z" fill="#f04e23" />
        <path d="M12.500 9h4v4h-4z" fill="#7fba00" />
        <path d="M7.500 14h4v4h-4z" fill="#00a3ee" />
        <path d="M12.500 14h4v4h-4z" fill="#ffb800" />
      </g>
    ),
  },
  {
    name: "Mail",
    art: (
      <g stroke="none">
        <path d="M2 9l10-6.500L22 9v6H2z" fill="#0f5aa8" />
        <path d="M3.500 8h17v7h-17z" fill="#f2f7fc" />
        <path d="M2 8.500l10 7-10 5.500z" fill="#2aa8ec" />
        <path d="M22 8.500v12.500H2l10-6z" fill="#3cc4f5" />
        <path d="M2 21l10-6 10 6z" fill="#1c93e0" />
      </g>
    ),
  },
  {
    name: "Command Prompt",
    art: (
      <g stroke="none">
        <path d="M2 4h20v16H2z" fill="#8a8a8a" />
        <path d="M3 7h18v12H3z" fill="#050505" />
        <path d="M4.500 10h2M8 9v3M10 9l1 3M13 12h3" stroke="#dcdcdc" strokeWidth="1" />
      </g>
    ),
  },
  {
    name: "Chrome",
    art: (
      <g stroke="none">
        <circle cx="12" cy="12" r="9.800" fill="#fbc634" />
        <path d="M12 12L3.500 7A9.800 9.800 0 0 1 20.500 7z" fill="#e04a3a" />
        <path d="M12 7h8.500L12 12z" fill="#e04a3a" />
        <path d="M3.500 7A9.800 9.800 0 0 0 12 21.800L16 14.500 12 12z" fill="#2ba24c" />
        <circle cx="12" cy="12" r="4.800" fill="#ffffff" />
        <circle cx="12" cy="12" r="3.800" fill="#4285f4" />
      </g>
    ),
  },
  {
    name: "Game emulator",
    art: (
      <g stroke="none">
        <rect x="2" y="7" width="20" height="11" rx="4" fill="#6c2aa8" />
        <path d="M5 6h14v13H5z" fill="#8a3cc8" />
        <rect x="5" y="8.500" width="14" height="8.500" rx="2" fill="#101018" />
        <path d="M8 10h8v5H8z" fill="#4a7ae8" />
        <path d="M2.500 9h1.500v1.500H2.500zM20 9h1.500v1.500H20zM3 14h1v1H3zM20 14h1v1h-1z" fill="#d8c8e8" />
      </g>
    ),
  },
  {
    name: "Word",
    art: (
      <g stroke="none">
        <path d="M6 3h16v5H6z" fill="#41a5ee" />
        <path d="M6 8h16v4.500H6z" fill="#2b7cd3" />
        <path d="M6 12.500h16V17H6z" fill="#185abd" />
        <path d="M6 17h16v4H6z" fill="#103f91" />
        <path d="M2 6h12v12H2z" fill="#185abd" />
        <path d="M4 9l1.700 6L8 9.500l2.300 5.500L12 9" stroke="#ffffff" strokeWidth="1.500" />
      </g>
    ),
  },
];

function Taskbar() {
  return (
    <footer className="flex h-[38px] shrink-0 items-stretch bg-[#0a420a] font-['Open_Sans',sans-serif] text-[14px] text-white">
      <button aria-label="Start" className="flex w-11 items-center justify-center">
        <Icon>
          <path d="M2 4.500l8-1v8H2zM11 3.400L22 2v9.500H11zM2 12.500h8v8l-8-1zM11 12.500h11V22l-11-1.400z" fill="#ffffff" stroke="none" />
        </Icon>
      </button>
      <button aria-label="Search" className="flex w-[45px] items-center justify-center">
        <Icon>
          <circle cx="15" cy="9" r="6.800" stroke="#ffffff" strokeWidth="1.400" />
          <path d="M10 14l-8 8" stroke="#ffffff" strokeWidth="1.400" />
        </Icon>
      </button>
      <button aria-label="Cortana" className="flex w-[45px] items-center justify-center">
        <Icon>
          <circle cx="12" cy="12" r="8.600" stroke="#ffffff" strokeWidth="2.400" />
        </Icon>
      </button>
      <button aria-label="Task view" className="flex w-[45px] items-center justify-center">
        <Icon>
          <path d="M2.500 7.500h12v9h-12zM2.500 2v3h12V2M2.500 22v-3h12v3M20.500 2v5M20.500 12v10" stroke="#ffffff" strokeWidth="1.300" />
          <path d="M19 8.500h3v3h-3z" fill="#ffffff" stroke="none" />
        </Icon>
      </button>

      <div className="ml-1 flex">
        {APPS.map((app) => (
          <button
            key={app.name}
            aria-label={app.name}
            className="relative flex w-[46px] items-center justify-center"
          >
            <Icon>{app.art}</Icon>
            {app.name === "Word" && (
              <span className="absolute bottom-0 h-[3px] w-[35px] bg-[#76b976]" />
            )}
          </button>
        ))}
        <button
          aria-label="Photoshop"
          className="flex w-[45px] items-center justify-center border-b-3 border-[#76b976] bg-[#0d5f0d] pt-px"
        >
          <span className="flex h-[18px] w-[18px] items-center justify-center rounded-[3px] border-2 border-[#26b4ea] bg-[#001d2c] text-[9px] font-bold text-[#c9f0ff]">
            Ps
          </span>
        </button>
      </div>

      <div className="ml-auto flex items-center">
        <button aria-label="Show hidden icons">
          <Icon box="0 0 16 10" className="h-[10px] w-4">
            <path d="M1 9l7-7 7 7" stroke="#ffffff" strokeWidth="1.400" />
          </Icon>
        </button>
        <button aria-label="Volume muted" className="ml-[10px]">
          <Icon box="0 0 20 14" className="h-[14px] w-5">
            <path d="M1 4.500h3L7.500 1v12L4 9.500H1z" stroke="#ffffff" strokeWidth="1.200" />
            <path d="M12 4l6 6M18 4l-6 6" stroke="#ffffff" strokeWidth="1.300" />
          </Icon>
        </button>
        <button aria-label="Network" className="ml-[9px]">
          <Icon>
            <circle cx="12" cy="12" r="9.500" stroke="#ffffff" strokeWidth="1.400" />
            <ellipse cx="12" cy="12" rx="4.500" ry="9.500" stroke="#ffffff" strokeWidth="1.300" />
            <path d="M3.500 8.500h17M3.500 15.500h17" stroke="#ffffff" strokeWidth="1.300" />
            <circle cx="18" cy="18" r="4" fill="#0a420a" stroke="#ffffff" strokeWidth="1.200" />
            <path d="M15.500 15.500l5 5" stroke="#ffffff" strokeWidth="1.200" />
          </Icon>
        </button>
        <button aria-label="Battery" className="ml-[7px]">
          <Icon box="0 0 21 15" className="h-[15px] w-[21px]">
            <path d="M8 3h11v10H5V9M20 6v4" stroke="#ffffff" strokeWidth="1.200" />
            <path d="M8 5h9.500v6.500H7V8z" fill="#ffffff" stroke="none" />
            <path d="M1.500 0v3M4.500 0v3M.5 3h5v2.500L3 7.500.500 5.500zM3 7v4" stroke="#ffffff" strokeWidth="1.100" />
          </Icon>
        </button>
        <button aria-label="Touch keyboard" className="ml-[9px]">
          <Icon box="0 0 30 17" className="h-[17px] w-[30px]">
            <path d="M.7 .7h28.600v15.600H.7z" stroke="#ffffff" strokeWidth="1.200" />
            <path d="M4 5h22M4 8.500h22" stroke="#ffffff" strokeWidth="1.200" strokeDasharray="1.500 1.500" />
            <path d="M4 12.500h3M9 12.500h12M23 12.500h3" stroke="#ffffff" strokeWidth="1.200" />
          </Icon>
        </button>
        <button className="ml-[13px]">ENG</button>
        <button className="ml-[17px]">08:40 PM</button>
        <button aria-label="Notifications" className="ml-[22px]">
          <Icon>
            <path d="M2 2.500h20v16h-7L12 21.500 9 18.500H2z" stroke="#ffffff" strokeWidth="1.400" />
          </Icon>
        </button>
        <button aria-label="Show desktop" className="ml-[23px] h-[38px] w-[6px] border-l border-[#6f946f]" />
      </div>
    </footer>
  );
}

export default function App() {
  return (
    <div className="flex h-screen flex-col overflow-hidden bg-[#535353] font-['Noto_Sans',sans-serif] text-[12px]">
      <MenuBar />
      <OptionsBar />

      <div className="flex min-h-0 flex-1 border-b border-[#383838]">
        <Toolbox />
        <DocumentArea />
        <Dock />
        <div className="flex w-[464px] shrink-0 flex-col border-r border-[#383838] bg-[#535353] text-[#d0d0d0]">
          <div className="flex h-[15px] shrink-0 items-center justify-end border-b border-[#383838] bg-[#424242] pr-[7px]">
            <DoubleArrow />
          </div>
          <LayersPanel />
          <ChannelsPanel />
        </div>
      </div>

      <Taskbar />
    </div>
  );
}
